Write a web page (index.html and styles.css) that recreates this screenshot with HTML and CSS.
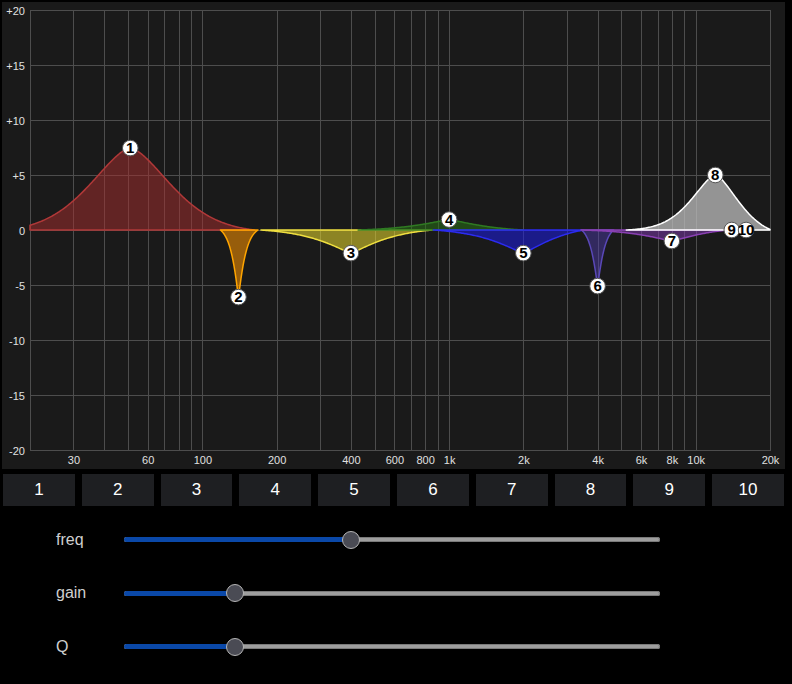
FILE: index.html
```html
<!DOCTYPE html>
<html lang="en">
<head>
  <meta charset="UTF-8" />
  <meta name="viewport" content="width=device-width, initial-scale=1" />
  <title>Parametric EQ</title>
  <link rel="stylesheet" href="styles.css">
</head>
<body>
  <div class="app">
    <div class="graph">
      <svg id="eq" width="783" height="467" viewBox="2 2 783 467"></svg>
    </div>

    <div class="bands">
      <button>1</button>
      <button>2</button>
      <button>3</button>
      <button>4</button>
      <button>5</button>
      <button>6</button>
      <button>7</button>
      <button>8</button>
      <button>9</button>
      <button>10</button>
    </div>

    <div class="controls">
      <div class="row">
        <span class="name">freq</span>
        <div class="slider">
          <div class="fill" style="width: 227px"></div>
          <div class="thumb" style="left: 227px"></div>
        </div>
      </div>
      <div class="row">
        <span class="name">gain</span>
        <div class="slider">
          <div class="fill" style="width: 111px"></div>
          <div class="thumb" style="left: 111px"></div>
        </div>
      </div>
      <div class="row">
        <span class="name">Q</span>
        <div class="slider">
          <div class="fill" style="width: 111px"></div>
          <div class="thumb" style="left: 111px"></div>
        </div>
      </div>
    </div>
  </div>

  <script src="eq.js"></script>
</body>
</html>
```

FILE: styles.css
```css
body {
  background-color: #000;
  color: #fff;
  font-family: "Liberation Sans", Arial, sans-serif;
  margin: 0; padding: 0;
}
.app {
  width: 783px;
  margin-left: 2px;
  padding-top: 2px;
}
.graph {
  height: 467px;
  background-color: #1a1a1a;
}
.graph svg {
  display: block;
}
.grid line {
  stroke: #4d4d4d;
  stroke-width: 1;
}
.axis text {
  fill: #e0e0e0;
  font-size: 11px;
  font-family: "Liberation Sans", Arial, sans-serif;
}
.handle circle {
  fill: #fff;
  stroke: #555;
  stroke-width: 1;
}
.handle text {
  fill: #000;
  font-size: 15px;
  font-weight: bold;
  font-family: "Liberation Sans", Arial, sans-serif;
}
.bands {
  display: flex;
  gap: 7px;
  margin-top: 5px;
  padding: 0 1px;
}
.bands button {
  flex: 1;
  height: 32px;
  padding: 0;
  border: none;
  border-radius: 0;
  background-color: #1e1f22;
  color: #fff;
  font-family: inherit;
  font-size: 17px;
}
.controls {
  padding-top: 7px;
}
.row {
  display: flex;
  align-items: center;
  height: 53.5px;
}
.name {
  width: 68px;
  padding-left: 54px;
  color: #cfcfcf;
  font-size: 16px;
}
.slider {
  position: relative;
  width: 536px;
  height: 5px;
  background-color: #9e9e9e;
  border-radius: 3px;
  box-shadow: inset 0 0 0 1px #7a7a7a;
}
.fill {
  height: 100%;
  background-color: #0a48a8;
  border-radius: 3px 0 0 3px;
}
.thumb {
  position: absolute;
  top: 50%;
  width: 16px;
  height: 16px;
  border-radius: 50%;
  background-color: #4a4b54;
  border: 1px solid #b5b5b5;
  transform: translate(-50%, -50%);
}
```

FILE: eq.js
```js
const svg = document.getElementById("eq");
const NS = "http://www.w3.org/2000/svg";

const plotLeft = 30, plotRight = 770, plotTop = 10, plotBottom = 450, zero = 230;
const perDecade = (plotRight - plotLeft) / 3;
const perDb = 11;

function xOf(f) { return plotLeft + perDecade * Math.log10(f / 20); }
function yOf(db) { return zero - db * perDb; }

function add(tag, attrs, parent) {
  const node = document.createElementNS(NS, tag);
  for (const k in attrs) node.setAttribute(k, attrs[k]);
  (parent || svg).appendChild(node);
  return node;
}

// grid
const grid = add("g", { class: "grid" });
const lines = [20, 30, 40, 50, 60, 70, 80, 90, 100, 200, 300, 400, 500, 600, 700, 800, 900,
  1000, 2000, 3000, 4000, 5000, 6000, 7000, 8000, 9000, 10000, 20000];
lines.forEach(f => {
  const x = Math.round(xOf(f)) + 0.5;
  add("line", { x1: x, y1: plotTop, x2: x, y2: plotBottom + 1 }, grid);
});
for (let db = -20; db <= 20; db += 5) {
  const y = Math.round(yOf(db)) + 0.5;
  add("line", { x1: plotLeft, y1: y, x2: plotRight + 1, y2: y }, grid);
}

// axis labels
const axis = add("g", { class: "axis" });
const xLabels = { 30: "30", 60: "60", 100: "100", 200: "200", 400: "400", 600: "600", 800: "800",
  1000: "1k", 2000: "2k", 4000: "4k", 6000: "6k", 8000: "8k", 10000: "10k", 20000: "20k" };
for (const f in xLabels) {
  const t = add("text", { x: xOf(+f) + 0.5, y: 464, "text-anchor": "middle" }, axis);
  t.textContent = xLabels[f];
}
for (let db = -20; db <= 20; db += 5) {
  const t = add("text", { x: 25, y: yOf(db) + 4.5, "text-anchor": "end" }, axis);
  t.textContent = db > 0 ? "+" + db : String(db);
}

// bands
const bands = [
  { f: 51, gain: 7.45, w: 58, p: 1.6, l: 124, r: 124, line: "#b03838", fill: "rgba(170,45,45,0.5)" },
  { f: 140, gain: -6.1, w: 7.5, p: 1.1, l: 18, r: 19.5, line: "#ffa500", fill: "rgba(255,150,0,0.55)" },
  { f: 400, gain: -2.1, w: 42, p: 1.2, l: 90, r: 81, line: "#f0e040", fill: "rgba(235,220,45,0.55)" },
  { f: 1000, gain: 0.95, w: 45, p: 1.2, l: 91, r: 74, line: "#2f7a22", fill: "rgba(40,120,20,0.5)" },
  { f: 2000, gain: -2.1, w: 42, p: 1.2, l: 90, r: 60, line: "#2b2bf0", fill: "rgba(30,30,230,0.55)" },
  { f: 4000, gain: -5.1, w: 7, p: 1.1, l: 16, r: 16, line: "#5a48b8", fill: "rgba(80,60,180,0.45)" },
  { f: 8000, gain: -1.0, w: 40, p: 1.2, l: 91, r: 56, line: "#8a40b4", fill: "rgba(130,55,180,0.5)" },
  { f: 12000, gain: 5.0, w: 34, p: 1.56, l: 89, r: 56, line: "#ffffff", fill: "rgba(190,190,190,0.75)" },
  { f: 14000, gain: 0 },
  { f: 16000, gain: 0 }
];

function shape(d, b) {
  const edge = d < 0 ? b.l : b.r;
  if (Math.abs(d) >= edge) return 0;
  const e = t => Math.exp(-Math.pow(Math.abs(t) / b.w, b.p));
  return b.gain * (e(d) - e(edge)) / (1 - e(edge));
}

const curves = add("g", { class: "curves" });
bands.forEach(b => {
  if (!b.gain) return;
  const cx = xOf(b.f);
  const x0 = Math.max(plotLeft, cx - b.l);
  const x1 = Math.min(plotRight, cx + b.r);
  const xs = [x0, cx, x1];
  for (let x = Math.ceil(x0); x <= x1; x++) xs.push(x);
  xs.sort((a, c) => a - c);

  let d = "M" + x0 + " " + zero;
  xs.forEach(x => { d += " L" + x.toFixed(2) + " " + yOf(shape(x - cx, b)).toFixed(2); });
  d += " L" + x1 + " " + zero + " Z";
  add("path", { d: d, fill: b.fill, stroke: b.line, "stroke-width": 1.5, "stroke-linejoin": "round" }, curves);
});

// handles
bands.forEach((b, i) => {
  const g = add("g", { class: "handle" });
  const x = xOf(b.f), y = yOf(b.gain);
  add("circle", { cx: x, cy: y, r: 7.8 }, g);
  const t = add("text", { x: x, y: y + 5.3, "text-anchor": "middle" }, g);
  t.textContent = i + 1;
});
```
